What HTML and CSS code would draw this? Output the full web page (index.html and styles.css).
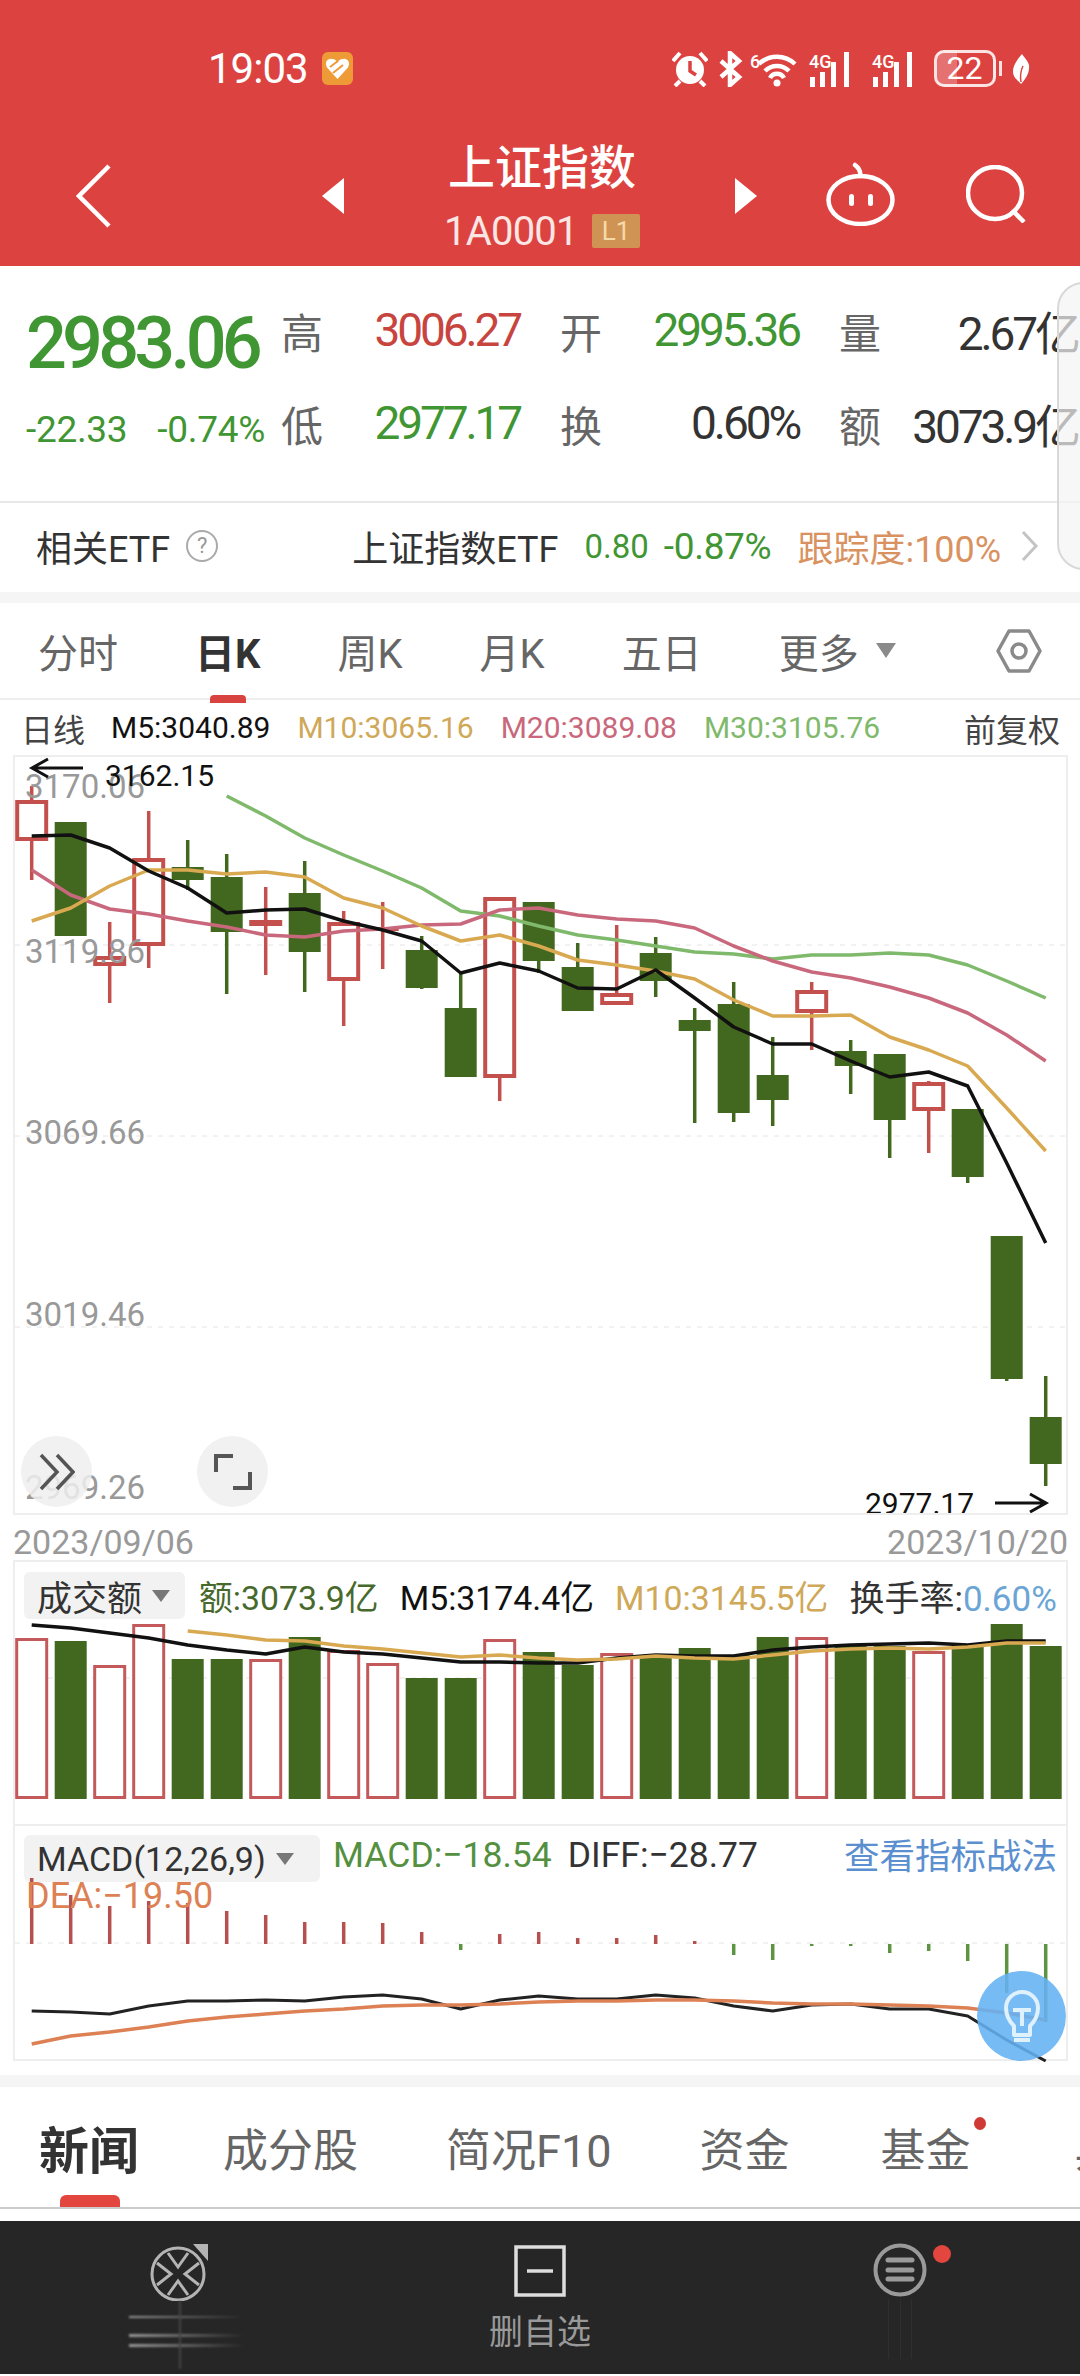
FILE: index.html
```html
<!DOCTYPE html>
<html lang="zh-CN">
<head>
  <meta charset="UTF-8" />
  <title>上证指数</title>
  <link rel="stylesheet" href="styles.css">
</head>
<body>
  <div class="header">
    <div class="status">
      <span class="clock">19:03</span>
      <svg class="heart" viewBox="0 0 31 33"><rect width="31" height="33" rx="6" fill="#ee9a37"/><path d="M15.5 27 5 15.500C2 10 6 6 10 7c3 0 5 2 5.500 4C16 9 18 7 21 7c4-1 8 3 5 8.500z" fill="#fff"/><path d="M8 15l8-6M11 21l10-8" stroke="#ee9a37" stroke-width="2"/></svg>
      <div class="status-icons">
        <svg class="ic-alarm" viewBox="0 0 36 36"><circle cx="18" cy="19" r="14" fill="#fff"/><path d="M18 10v10l6 4" fill="none" stroke="#dc4340" stroke-width="3.500"/><path d="M1 10l7-8M35 10l-7-8M8 30l-5 5M28 30l5 5" stroke="#fff" stroke-width="4"/></svg>
        <svg class="ic-bt" viewBox="0 0 25 36"><path d="M3 10l18 16-9 8V2l9 8L3 26" fill="none" stroke="#fff" stroke-width="4.500"/></svg>
        <svg class="ic-wifi" viewBox="0 0 48 36"><text x="0" y="17" class="ic-text">6</text><path d="M9 13a26 26 0 0 1 36 0M15 20a17 17 0 0 1 24 0M20 27a8 8 0 0 1 14 0" fill="none" stroke="#fff" stroke-width="4.500"/><circle cx="27" cy="32" r="3.500" fill="#fff"/></svg>
        <svg class="ic-sig" viewBox="0 0 50 36"><text x="0" y="17" class="ic-text">4G</text><path d="M1 26h5v10H1zM11 21h5v15h-5zM22 11h5v25h-5zM35 1h5v35h-5z" fill="#fff"/></svg>
        <svg class="ic-sig" viewBox="0 0 50 36"><text x="0" y="17" class="ic-text">4G</text><path d="M1 26h5v10H1zM11 21h5v15h-5zM22 11h5v25h-5zM35 1h5v35h-5z" fill="#fff"/></svg>
        <span class="battery">22</span>
        <svg class="ic-leaf" viewBox="0 0 18 36"><path d="M10 3C3 11-1 18 2 25c2 4 6 6 7 8 4-4 9-11 8-19-1-4-5-8-7-11z" fill="#fff"/><path d="M9 31c-1-6 0-12 2-16" fill="none" stroke="#dc4340" stroke-width="1.500"/></svg>
      </div>
    </div>
    <div class="nav">
      <svg class="nav-back" viewBox="0 0 36 64"><path d="M33 2 3 32l30 30" fill="none" stroke="#fff" stroke-width="4.500"/></svg>
      <svg class="nav-prev" viewBox="0 0 22 36"><path d="M22 0v36L0 18z" fill="#fff"/></svg>
      <div class="nav-title">
        <div class="title">上证指数</div>
        <div class="code"><span>1A0001</span><span class="level">L1</span></div>
      </div>
      <svg class="nav-next" viewBox="0 0 22 36"><path d="M0 0v36l22-18z" fill="#fff"/></svg>
      <svg class="nav-robot" viewBox="0 0 69 64"><ellipse cx="34.500" cy="38" rx="32" ry="24" fill="none" stroke="#fff" stroke-width="4.500"/><path d="M34 14c1-5-1-8-5-11" fill="none" stroke="#fff" stroke-width="4.500" stroke-linecap="round"/><rect x="23" y="32" width="5" height="12" rx="2.500" fill="#fff"/><rect x="42" y="32" width="5" height="12" rx="2.500" fill="#fff"/></svg>
      <svg class="nav-search" viewBox="0 0 60 58"><ellipse cx="29" cy="28" rx="27" ry="26" fill="none" stroke="#fff" stroke-width="4.500"/><path d="M46 45l12 12" stroke="#fff" stroke-width="4.500"/></svg>
    </div>
  </div>

  <div class="quote">
    <div class="price-block">
      <div class="price">2983.06</div>
      <div class="change"><span>-22.33</span><span>-0.74%</span></div>
    </div>
    <div class="stats">
      <div class="stat"><span class="stat-label">高</span><span class="stat-value up">3006.27</span></div>
      <div class="stat"><span class="stat-label">开</span><span class="stat-value down">2995.36</span></div>
      <div class="stat"><span class="stat-label">量</span><span class="stat-value">2.67亿</span></div>
      <div class="stat"><span class="stat-label">低</span><span class="stat-value down">2977.17</span></div>
      <div class="stat"><span class="stat-label">换</span><span class="stat-value">0.60%</span></div>
      <div class="stat"><span class="stat-label">额</span><span class="stat-value">3073.9亿</span></div>
    </div>
    <div class="side-handle"></div>
  </div>

  <div class="etf">
    <span>相关ETF</span>
    <span class="help">?</span>
    <span class="etf-name">上证指数ETF</span>
    <span class="etf-price">0.80</span>
    <span class="etf-pct">-0.87%</span>
    <span class="etf-track">跟踪度:100%</span>
    <svg class="etf-more" viewBox="0 0 18 32"><path d="M2 2l13 14L2 30" fill="none" stroke="#c4c4c4" stroke-width="3"/></svg>
  </div>
  <div class="band"></div>

  <div class="periods">
    <span>分时</span>
    <span class="active">日K</span>
    <span>周K</span>
    <span>月K</span>
    <span>五日</span>
    <span>更多</span>
    <i class="caret"></i>
    <svg class="gear" viewBox="0 0 46 44"><path d="M13 2h20l11 20-11 20H13L2 22z" fill="none" stroke="#8a8a8a" stroke-width="3.500" stroke-linejoin="round"/><circle cx="23" cy="22" r="7" fill="none" stroke="#8a8a8a" stroke-width="3.500"/></svg>
  </div>

  <div class="ma-row">
    <span class="ma-type">日线</span>
    <span class="black">M5:3040.89</span>
    <span class="gold">M10:3065.16</span>
    <span class="pink">M20:3089.08</span>
    <span class="lime">M30:3105.76</span>
    <span class="adjust">前复权</span>
  </div>

  <div class="kline">
    <svg id="klineChart" class="plot" viewBox="15 759 1051 756" width="1051" height="756"></svg>
    <div class="round-btn btn-expand">
      <svg viewBox="0 0 36 38"><path d="M2 2l16 17L2 36M18 2l16 17-16 17" fill="none" stroke="#555" stroke-width="3.500"/></svg>
    </div>
    <div class="round-btn btn-full">
      <svg viewBox="0 0 38 36"><path d="M2 18V2h17M19 34h17V18" fill="none" stroke="#555" stroke-width="4"/></svg>
    </div>
  </div>

  <div class="dates"><span>2023/09/06</span><span>2023/10/20</span></div>

  <div class="vol">
    <div class="sub-head">
      <span class="picker picker-vol">成交额<i class="caret"></i></span>
      <span class="vol-green">额:3073.9亿</span>
      <span class="black">M5:3174.4亿</span>
      <span class="gold">M10:3145.5亿</span>
      <span class="dark turnover">换手率:<em class="sky">0.60%</em></span>
    </div>
    <svg id="volChart" class="plot" viewBox="15 1621 1051 205" width="1051" height="205"></svg>
  </div>

  <div class="macd">
    <div class="sub-head">
      <span class="picker picker-macd">MACD(12,26,9)<i class="caret"></i></span>
      <span class="macd-val macd-green">MACD:−18.54</span>
      <span class="macd-val dark">DIFF:−28.77</span>
      <a class="macd-val macd-link">查看指标战法</a>
    </div>
    <svg id="macdChart" class="plot" viewBox="15 1884 1051 177" width="1051" height="177"></svg>
    <span class="dea">DEA:−19.50</span>
    <div class="bulb">
      <svg viewBox="0 0 36 56"><path d="M10 38C5 33 2 28 2 20a16 16 0 0 1 32 0c0 8-3 13-8 18v9H10z" fill="none" stroke="#dff1fd" stroke-width="4" stroke-linejoin="round"/><path d="M9 22h18M18 22v16M10 52h16" fill="none" stroke="#dff1fd" stroke-width="4"/></svg>
    </div>
  </div>

  <div class="band band-low"></div>

  <div class="news-tabs">
    <span class="active">新闻</span>
    <span>成分股</span>
    <span>简况F10</span>
    <span>资金</span>
    <span class="dotted">基金</span>
    <span>异动</span>
  </div>

  <div class="bottom-nav">
    <div class="nav-item">
      <svg class="nav-trade" viewBox="0 0 60 58"><ellipse cx="28" cy="31" rx="26" ry="26" fill="none" stroke="#b4b4b4" stroke-width="3"/><path d="M18 10l10 14 10-14M18 52l10-14 10 14M7 20l14 11L7 42M49 20 35 31l14 11" fill="none" stroke="#b4b4b4" stroke-width="3"/><path d="M43 1h15v17z" fill="#b4b4b4"/></svg>
      <svg class="smear" viewBox="0 0 116 70">
        <defs><linearGradient id="fade"><stop offset="0" stop-color="#999"/><stop offset="1" stop-color="#999" stop-opacity="0"/></linearGradient></defs>
        <path d="M0 15h116v2H0zM0 33h116v3H0zM0 43h116v3H0z" fill="url(#fade)"/>
        <path d="M50 0h2v68h-2z" fill="#444"/>
      </svg>
    </div>
    <div class="nav-item">
      <svg class="nav-remove" viewBox="0 0 52 52"><rect x="2" y="2" width="48" height="48" fill="none" stroke="#ddd" stroke-width="3.500"/><path d="M13 26h26" stroke="#ddd" stroke-width="3.500"/></svg>
      <span class="nav-text">删自选</span>
    </div>
    <div class="nav-item nav-item-menu">
      <svg class="nav-menu" viewBox="0 0 54 54"><circle cx="27" cy="27" r="24.500" fill="none" stroke="#9a9a9a" stroke-width="4"/><path d="M15 17h24M15 27h24M15 36h24" stroke="#9a9a9a" stroke-width="5" stroke-linecap="round"/></svg>
      <i class="menu-dot"></i>
      <svg class="streaks" viewBox="0 0 26 60"><path d="M1 0h1v60H1zM13 0h1v60h-1zM24 0h1v60h-1z" fill="#2f2f2f"/></svg>
    </div>
  </div>

  <script src="chart.js"></script>
</body>
</html>
```

FILE: styles.css
```css
* {
  box-sizing: border-box;
}
body {
  font-family: Roboto, "Noto Sans CJK SC", sans-serif;
  margin: 0;
  width: 1080px;
  height: 2376px;
  overflow: hidden;
  background: #fff;
  color: #333;
}
em {
  font-style: normal;
}

.header {
  background: #dc4340;
  color: #fff;
  height: 266px;
  padding-top: 50px;
}
.status {
  display: flex;
  align-items: center;
  height: 37px;
  padding-left: 208px;
}
.clock {
  font-size: 42px;
  letter-spacing: -1px;
  line-height: 37px;
}
.heart {
  width: 31px;
  height: 33px;
  margin-left: 14px;
}
.status-icons {
  display: flex;
  align-items: center;
  margin-left: 319px;
}
.status-icons svg {
  height: 36px;
}
.ic-alarm { width: 36px; }
.ic-bt { width: 25px; margin-left: 10px; }
.ic-wifi { width: 48px; margin-left: 7px; }
.ic-sig { width: 50px; margin-left: 11px; }
.ic-sig + .ic-sig { margin-left: 13px; }
.ic-leaf { width: 18px; margin-left: 16px; }
.ic-text {
  fill: #fff;
  font-size: 18px;
  font-weight: 500;
}
.battery {
  position: relative;
  width: 62px;
  height: 37px;
  margin-left: 12px;
  border: 3px solid rgba(255,255,255,0.85);
  border-radius: 10px;
  background: linear-gradient(to right, rgba(255,255,255,0.25) 35%, transparent 35%);
  font-size: 32px;
  line-height: 31px;
  text-align: center;
}
.battery::after {
  content: "";
  position: absolute;
  right: -9px;
  top: 8px;
  width: 3px;
  height: 15px;
  background: rgba(255,255,255,0.85);
}

.nav {
  display: flex;
  align-items: center;
  padding-top: 56px;
}
.nav-back { width: 36px; height: 64px; margin-left: 76px; }
.nav-prev { width: 22px; height: 36px; margin-left: 210px; }
.nav-title { width: 196px; margin-left: 100px; text-align: center; }
.nav-next { width: 22px; height: 36px; margin-left: 95px; }
.nav-robot { width: 69px; height: 64px; margin-left: 69px; margin-top: -4px; }
.nav-search { width: 60px; height: 58px; margin-left: 71px; margin-top: -4px; }
.title {
  font-size: 47px;
  font-weight: 500;
  line-height: 50px;
  white-space: nowrap;
}
.code {
  display: flex;
  align-items: center;
  justify-content: space-between;
  height: 34px;
  margin-top: 21px;
  font-size: 40px;
  letter-spacing: -0.800px;
  color: #fbe6e4;
}
.level {
  width: 48px;
  height: 34px;
  background: #cf9454;
  color: #f6d9a8;
  font-size: 26px;
  letter-spacing: 0;
  line-height: 34px;
  text-align: center;
  border-radius: 2px;
}

.quote {
  position: relative;
  display: flex;
  height: 235px;
  padding-left: 26px;
}
.price-block {
  width: 255px;
  padding-top: 42px;
}
.price {
  color: #3f9633;
  font-size: 72px;
  font-weight: 500;
  letter-spacing: -4.800px;
  line-height: 72px;
  white-space: nowrap;
}
.change {
  display: flex;
  gap: 30px;
  margin-top: 35px;
  color: #3f9633;
  font-size: 37px;
  letter-spacing: -0.300px;
  line-height: 30px;
  white-space: nowrap;
}
.stats {
  display: grid;
  grid-template-columns: repeat(3, 239px);
  column-gap: 40px;
  row-gap: 33px;
  padding-top: 34px;
  align-content: start;
}
.stat {
  display: flex;
  justify-content: space-between;
  align-items: center;
  height: 60px;
  white-space: nowrap;
}
.stat-label {
  color: #666;
  font-size: 42px;
}
.stat-value {
  color: #333;
  font-size: 46px;
  letter-spacing: -3.100px;
}
.stat-value.up { color: #c8453f; }
.stat-value.down { color: #3f9633; }
.side-handle {
  position: absolute;
  right: -30px;
  top: 16px;
  width: 53px;
  height: 288px;
  border: 2px solid #d8d8d8;
  border-radius: 30px;
  background: rgba(244,244,244,0.7);
}

.etf {
  display: flex;
  align-items: center;
  height: 91px;
  padding-left: 36px;
  padding-bottom: 3px;
  border-top: 2px solid #e8e8e8;
  font-size: 36px;
  white-space: nowrap;
}
.help {
  width: 32px;
  height: 32px;
  margin-left: 16px;
  border: 2px solid #aaa;
  border-radius: 50%;
  color: #999;
  font-size: 22px;
  line-height: 28px;
  text-align: center;
}
.etf-name { margin-left: 134px; }
.etf-price { margin-left: 26px; color: #3f9633; font-size: 33px; }
.etf-pct { margin-left: 15px; color: #3f9633; font-size: 37px; letter-spacing: -0.300px; }
.etf-track { margin-left: 26px; color: #d9925f; font-size: 36px; }
.etf-more { width: 18px; height: 32px; margin-left: 20px; }

.band {
  height: 11px;
  background: #f5f5f5;
}
.band-low {
  height: 12px;
  margin-top: 14px;
}

.periods {
  display: flex;
  align-items: center;
  gap: 77px;
  height: 97px;
  padding-left: 38px;
  border-bottom: 2px solid #eee;
  color: #666;
  font-size: 40px;
}
.periods .active {
  position: relative;
  color: #333;
  font-weight: 700;
}
.periods .active::after {
  content: "";
  position: absolute;
  left: 15px;
  bottom: -23px;
  width: 36px;
  height: 8px;
  background: #d9433f;
  border-radius: 4px 4px 0 0;
}
.caret {
  display: inline-block;
  width: 0;
  height: 0;
  border-left: 10px solid transparent;
  border-right: 10px solid transparent;
  border-top: 15px solid #8a8a8a;
}
.periods .caret {
  margin-left: -60px;
}
.gear {
  width: 46px;
  height: 44px;
  margin-left: 23px;
}

.ma-row {
  display: flex;
  align-items: center;
  gap: 27px;
  height: 55px;
  padding: 0 20px 0 21px;
  font-size: 30px;
  white-space: nowrap;
}
.ma-type, .adjust {
  color: #444;
  font-size: 32px;
}
.adjust {
  margin-left: auto;
}
.ma-type {
  margin-right: -1px;
}
.black { color: #111; }
.dark { color: #333; }
.gold { color: #cfa858; }
.pink { color: #c9687c; }
.lime { color: #7fb96b; }
.sky { color: #6ba5d5; }

.kline {
  position: relative;
  width: 1055px;
  height: 760px;
  margin-left: 13px;
  border: 2px solid #eee;
}
.plot {
  display: block;
}
.axis-label {
  fill: #999;
  font-size: 33px;
}
.mark-label {
  fill: #111;
  font-size: 30px;
}
.round-btn {
  position: absolute;
  bottom: 6px;
  display: flex;
  align-items: center;
  justify-content: center;
  width: 71px;
  height: 71px;
  border-radius: 50%;
  background: rgba(238,238,238,0.85);
}
.btn-expand { left: 6px; }
.btn-expand svg { width: 36px; height: 38px; }
.btn-full { left: 182px; }
.btn-full svg { width: 38px; height: 36px; }

.dates {
  display: flex;
  justify-content: space-between;
  height: 45px;
  padding: 7px 12px 0 13px;
  color: #999;
  font-size: 34px;
  line-height: 40px;
}

.vol {
  width: 1055px;
  height: 264px;
  margin-left: 13px;
  border: 2px solid #eee;
  border-bottom: 0;
}
.sub-head {
  display: flex;
  align-items: center;
  gap: 21px;
  height: 47px;
  margin: 10px 0 0 9px;
  font-size: 33.800px;
  white-space: nowrap;
}
.turnover {
  font-size: 35px;
}
.picker {
  display: flex;
  align-items: center;
  height: 47px;
  padding-left: 13px;
  background: #f2f2f2;
  border-radius: 6px;
  color: #333;
}
.picker .caret {
  border-left-width: 9px;
  border-right-width: 9px;
  border-top-width: 12px;
  border-top-color: #777;
}
.picker-vol {
  width: 161px;
  margin-right: -7px;
  font-size: 35px;
}
.picker-vol .caret { margin-left: 10px; }
.picker-macd {
  width: 296px;
  margin-right: -3px;
  font-size: 34px;
}
.picker-macd .caret { margin-left: 10px; }
.vol-green { color: #47692c; }

.macd {
  position: relative;
  width: 1055px;
  height: 237px;
  margin-left: 13px;
  border: 2px solid #eee;
}
.macd .sub-head {
  margin-top: 9px;
  gap: 16px;
}
.macd-val {
  margin-bottom: 8px;
  font-size: 35.500px;
}
.macd-green { color: #54903f; }
.macd-link {
  margin-left: auto;
  margin-right: 9px;
  margin-bottom: 10px;
  color: #5b8fcf;
}
.dea {
  position: absolute;
  left: 11px;
  top: 51px;
  color: #dd8155;
  font-size: 36px;
  line-height: 38px;
}
.bulb {
  position: absolute;
  left: 962px;
  bottom: -2px;
  display: flex;
  align-items: center;
  justify-content: center;
  width: 89px;
  height: 90px;
  border-radius: 50%;
  background: rgba(100,178,244,0.88);
}
.bulb svg {
  width: 36px;
  height: 56px;
}

.news-tabs {
  display: flex;
  align-items: center;
  gap: 88px;
  height: 122px;
  padding-left: 39px;
  border-bottom: 2px solid #ccc;
  overflow: hidden;
  color: #666;
  font-size: 45px;
  white-space: nowrap;
}
.news-tabs .active {
  position: relative;
  margin-right: -4px;
  color: #333;
  font-size: 50px;
  font-weight: 700;
}
.news-tabs .active::after {
  content: "";
  position: absolute;
  left: 21px;
  bottom: -24px;
  width: 60px;
  height: 12px;
  background: #e2463f;
  border-radius: 6px 6px 0 0;
}
.dotted {
  position: relative;
  margin-left: 3px;
  margin-right: 16px;
}
.dotted::after {
  content: "";
  position: absolute;
  right: -15px;
  top: 2px;
  width: 12px;
  height: 13px;
  background: #cf3a36;
  border-radius: 50%;
}

.bottom-nav {
  display: grid;
  grid-template-columns: repeat(3, 360px);
  height: 153px;
  margin-top: 12px;
  background: #262626;
}
.nav-item {
  position: relative;
  display: flex;
  flex-direction: column;
  align-items: center;
  padding-top: 22px;
}
.nav-trade { width: 60px; height: 58px; }
.smear { width: 116px; height: 70px; margin-left: 14px; filter: blur(1px); }
.nav-remove { width: 52px; height: 52px; margin-top: 2px; }
.nav-text {
  margin-top: 15px;
  color: #999;
  font-size: 34px;
  line-height: 40px;
}
.nav-menu { width: 54px; height: 54px; }
.streaks { width: 26px; height: 60px; margin-top: 2px; }
.menu-dot {
  position: absolute;
  left: 213px;
  top: 24px;
  width: 18px;
  height: 18px;
  background: #e2463f;
  border-radius: 50%;
}
```

FILE: chart.js
```js
const NS = 'http://www.w3.org/2000/svg';
const X0 = 31.7, STEP = 39;
const xAt = i => X0 + i * STEP;

function add(svg, tag, attrs, text) {
  const el = document.createElementNS(NS, tag);
  for (const k in attrs) el.setAttribute(k, attrs[k]);
  if (text) el.textContent = text;
  svg.appendChild(el);
  return el;
}

function dashed(svg, y) {
  add(svg, 'line', { x1: 15, x2: 1066, y1: y, y2: y, stroke: '#e4e4e4', 'stroke-width': 1, 'stroke-dasharray': '5 6' });
}

function line(svg, ys, color, first, width) {
  const pts = ys.map((y, i) => xAt(i + first).toFixed(1) + ',' + y).join(' ');
  add(svg, 'polyline', { points: pts, fill: 'none', stroke: color, 'stroke-width': width || 3.5, 'stroke-linejoin': 'round' });
}

const GREEN = '#42681f', RED = '#c4504e';

// top, bottom, high, low (r = red hollow candle)
const candles = [
  ['r', 802, 843, 788, 882], ['g', 824, 938, 824, 938], ['r', 958, 968, 924, 1005], ['r', 860, 948, 813, 970],
  ['g', 869, 882, 842, 892], ['g', 879, 934, 856, 996], ['r', 922, 928, 889, 977], ['g', 895, 954, 863, 994],
  ['r', 924, 983, 913, 1028], ['r', 929, 933, 904, 971], ['g', 952, 990, 938, 991], ['g', 1010, 1079, 973, 1079],
  ['r', 899, 1080, 899, 1103], ['g', 904, 963, 904, 975], ['g', 969, 1013, 945, 1013], ['r', 995, 1007, 927, 1007],
  ['g', 955, 983, 939, 999], ['g', 1022, 1033, 1010, 1125], ['g', 1006, 1115, 984, 1124], ['g', 1077, 1102, 1039, 1128],
  ['r', 992, 1015, 984, 1052], ['g', 1053, 1068, 1042, 1096], ['g', 1056, 1122, 1056, 1160], ['r', 1084, 1113, 1083, 1155],
  ['g', 1111, 1179, 1111, 1185], ['g', 1238, 1381, 1238, 1383], ['g', 1419, 1466, 1378, 1488]
];

const kline = document.getElementById('klineChart');
[947, 1138, 1329].forEach(y => dashed(kline, y));

candles.forEach((c, i) => {
  const [kind, top, bot, high, low] = c;
  const x = xAt(i), color = kind === 'r' ? RED : GREEN;
  add(kline, 'line', { x1: x, x2: x, y1: high, y2: low, stroke: color, 'stroke-width': 3.5 });
  if (kind === 'g' || bot - top < 6) {
    add(kline, 'rect', { x: x - 16, y: top, width: 32, height: bot - top, fill: color });
  } else {
    add(kline, 'rect', { x: x - 14.5, y: top + 2, width: 29, height: bot - top - 4, fill: '#fff', stroke: color, 'stroke-width': 4 });
  }
});

line(kline, [798, 818, 840, 857, 873, 890, 913, 918, 928, 937, 942, 948, 954, 956, 961, 957, 957, 955, 957, 967, 983, 1000], '#7fb96b', 5);
line(kline, [872, 897, 911, 916, 923, 929, 937, 939, 933, 931, 927, 926, 912, 910, 917, 921, 923, 930, 948, 963, 974, 980, 989, 1000, 1015, 1037, 1063], '#c9687c', 0);
line(kline, [923, 910, 888, 872, 872, 876, 874, 879, 900, 910, 928, 943, 937, 948, 962, 967, 973, 981, 1002, 1018, 1018, 1017, 1039, 1052, 1068, 1110, 1153], '#d8a950', 0);
line(kline, [838, 837, 850, 873, 890, 915, 912, 911, 923, 932, 943, 975, 965, 973, 990, 991, 972, 1000, 1029, 1046, 1046, 1063, 1079, 1074, 1088, 1165, 1245], '#111', 0);

[['3170.06', 800], ['3119.86', 965], ['3069.66', 1146], ['3019.46', 1328], ['2969.26', 1501]].forEach(l => {
  add(kline, 'text', { x: 25, y: l[1], class: 'axis-label' }, l[0]);
});

add(kline, 'text', { x: 105, y: 788, class: 'mark-label' }, '3162.15');
add(kline, 'text', { x: 865, y: 1516, class: 'mark-label' }, '2977.17');
add(kline, 'path', { d: 'M83 770H33M48 761l-16 9 16 9', fill: 'none', stroke: '#111', 'stroke-width': 3 });
add(kline, 'path', { d: 'M995 1505h50M1030 1496l16 9-16 9', fill: 'none', stroke: '#111', 'stroke-width': 3 });

// volume bars
const volTops = [1640, 1643, 1667, 1626, 1661, 1661, 1661, 1639, 1652, 1665, 1680, 1680, 1641, 1654, 1667, 1655, 1657, 1650, 1657, 1639, 1639, 1648, 1648, 1653, 1648, 1626, 1648];
const vol = document.getElementById('volChart');
dashed(vol, 1680);
volTops.forEach((top, i) => {
  const x = xAt(i);
  if (candles[i][0] === 'r') {
    add(vol, 'rect', { x: x - 15, y: top + 1.5, width: 30, height: 1801 - top - 3, fill: '#fff', 'fill-opacity': 0.9, stroke: '#c4595b', 'stroke-width': 3 });
  } else {
    add(vol, 'rect', { x: x - 16, y: top, width: 32, height: 1801 - top, fill: GREEN });
  }
});
line(vol, [1627, 1630, 1635, 1640, 1647, 1652, 1656, 1649, 1654, 1656, 1660, 1664, 1664, 1665, 1665, 1660, 1657, 1658, 1658, 1652, 1649, 1647, 1646, 1645, 1647, 1643, 1643], '#111', 0);
line(vol, [1633, 1637, 1642, 1643, 1648, 1651, 1655, 1659, 1657, 1660, 1662, 1661, 1658, 1660, 1661, 1657, 1653, 1651, 1650, 1651, 1649, 1645, 1645], '#d8a950', 4);

// macd
const macdBars = [1880, 1897, 1908, 1903, 1905, 1913, 1917, 1924, 1924, 1925, 1934, 1952, 1936, 1934, 1940, 1940, 1937, 1943, 1957, 1962, 1948, 1948, 1955, 1953, 1963, 1995, 2024];
const macd = document.getElementById('macdChart');
macd.style.overflow = 'visible';
dashed(macd, 1945);
macdBars.forEach((y, i) => {
  const x = xAt(i), color = y < 1945 ? '#b5504e' : '#5c9442';
  add(macd, 'line', { x1: x, x2: x, y1: Math.min(y, 1946), y2: Math.max(y, 1946), stroke: color, 'stroke-width': 3.5 });
});
line(macd, [2013, 2014, 2016, 2008, 2003, 2003, 2002, 2003, 1999, 1997, 2001, 2011, 2002, 1998, 2001, 2001, 1997, 2000, 2008, 2013, 2007, 2006, 2011, 2011, 2018, 2042, 2063], '#222', 0, 3);
line(macd, [2046, 2038, 2034, 2029, 2023, 2019, 2016, 2013, 2011, 2008, 2007, 2007, 2006, 2004, 2003, 2003, 2002, 2002, 2003, 2005, 2006, 2006, 2007, 2008, 2010, 2015, 2022], '#dd8155', 0);
```
